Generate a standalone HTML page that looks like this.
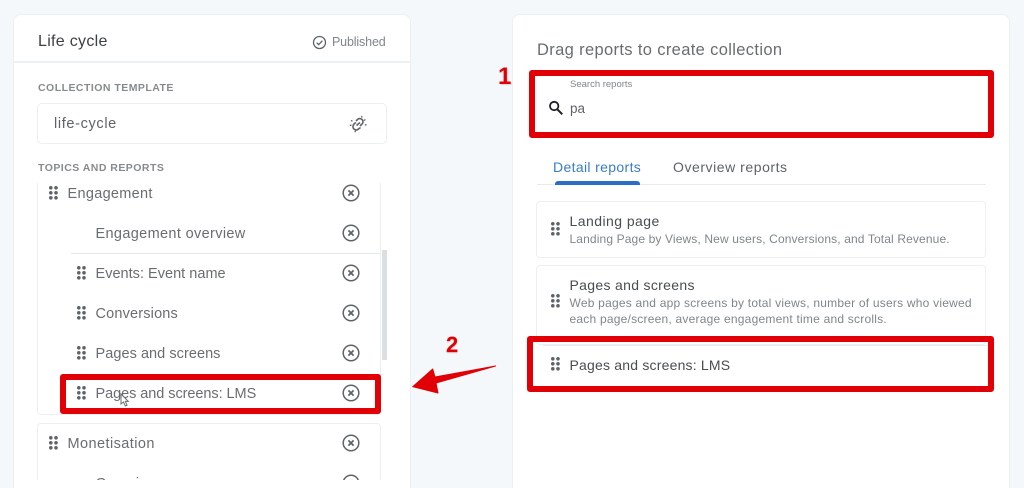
<!DOCTYPE html>
<html><head><meta charset="utf-8"><style>
html,body{margin:0;padding:0}
body{width:1024px;height:488px;overflow:hidden;background:#f4f8fa;position:relative;font-family:"Liberation Sans",sans-serif}
#w{position:absolute;left:0;top:0;width:1024px;height:488px;overflow:hidden;filter:blur(.3px)}
.a{position:absolute}
.t{position:absolute;white-space:nowrap;line-height:20px;height:20px}
.card{position:absolute;background:#fff;border:1px solid #edf0f2;box-sizing:border-box}
.row{font-size:14.5px;color:#6a6d70;letter-spacing:.35px}
.cap{font-size:10.5px;color:#737679;letter-spacing:.47px;font-weight:700;opacity:.85}
.red{position:absolute;box-sizing:border-box;border-style:solid;border-color:#e00006;border-radius:3px}
svg{position:absolute;overflow:visible}
</style></head><body><div id="w">

<div class="card" style="left:13px;top:14px;width:398px;height:490px;border-radius:8px 8px 0 0"></div>
<div class="a" style="left:13px;top:61px;width:398px;height:2px;background:#edf0f2"></div>
<div class="t" style="left:38px;top:32px;font-size:16px;color:#3c4043;letter-spacing:.3px">Life cycle</div>
<svg style="left:312px;top:35px" width="15" height="15" viewBox="0 0 15 15" fill="none" stroke="#5f6368" stroke-width="1.3"><circle cx="7.5" cy="7.5" r="6"/><path d="M4.7 7.7l2 2 3.7-4"/></svg>
<div class="t" style="left:332px;top:32px;font-size:12.5px;color:#80868b;letter-spacing:-.15px">Published</div>

<div class="t cap" style="left:38px;top:78px">COLLECTION TEMPLATE</div>
<div class="card" style="left:37px;top:103px;width:350px;height:41px;border-radius:5px"></div>
<div class="t" style="left:54px;top:114px;font-size:14.5px;color:#5f6368;letter-spacing:.65px">life-cycle</div>
<svg style="left:349px;top:115px" width="18" height="18" viewBox="0 0 18 18" fill="none" stroke="#5f6368"><path d="M7 6L8.500 4.500C10 3 12.500 3.500 13.500 5C14.500 6.500 14 8.500 12.500 9.500L11 11" stroke-width="1.600"/><path d="M11.500 12.500L9.500 14C8 15.500 5.500 15 4.500 13.500C3.500 12 4 10 5.500 8.500L7 7.500" stroke-width="1.600"/><path d="M7.500 10.500L11 7.500" stroke-width="1.500"/><path d="M13 1L12.500 2.500M16.500 4.500L15 5.500M17.500 10L15.800 9.800M2 5.500L3.500 6.200M.8 10.500L2.500 10M6 17.200L6.500 15.500" stroke-width="1.300"/></svg>
<div class="t cap" style="left:38px;top:158px">TOPICS AND REPORTS</div>

<div class="a" style="left:37px;top:183px;width:344px;height:232px;background:#fff;border:1px solid #edf0f2;border-top:none;box-sizing:border-box;border-radius:0 0 4px 4px"></div>
<div class="a" style="left:71px;top:253px;width:310px;height:1px;background:#e6e9eb"></div>
<div class="a" style="left:382px;top:250px;width:5px;height:110px;background:#dcdfe1"></div>
<div class="a" style="left:37px;top:423px;width:344px;height:70px;background:#fff;border:1px solid #edf0f2;box-sizing:border-box;border-radius:4px"></div>

<div class="t row" style="left:67.500px;top:184px;letter-spacing:.3px">Engagement</div>
<div class="t row" style="left:95.500px;top:224px">Engagement overview</div>
<div class="t row" style="left:95.500px;top:264px;letter-spacing:.02px">Events: Event name</div>
<div class="t row" style="left:95.500px;top:304px;letter-spacing:.17px">Conversions</div>
<div class="t row" style="left:95.500px;top:344px;letter-spacing:.05px">Pages and screens</div>
<div class="t row" style="left:95.500px;top:384px;letter-spacing:-.06px">Pages and screens: LMS</div>
<div class="t row" style="left:67.500px;top:434px;letter-spacing:.43px">Monetisation</div>
<div class="t row" style="left:95.500px;top:474px">Overview</div>

<svg width="0" height="0" style="left:0;top:0"><defs>
<g id="d" fill="#5f6368"><circle cx="1.800" cy="1.800" r="1.800"/><circle cx="7" cy="1.800" r="1.800"/><circle cx="1.800" cy="6.800" r="1.800"/><circle cx="7" cy="6.800" r="1.800"/><circle cx="1.800" cy="11.800" r="1.800"/><circle cx="7" cy="11.800" r="1.800"/></g>
<g id="x" fill="none" stroke="#5f6368"><circle cx="9" cy="9" r="7.800" stroke-width="1.500"/><path d="M6.400 6.400l5.200 5.200M11.600 6.400l-5.200 5.200" stroke-width="1.800"/></g>
</defs></svg>

<svg style="left:49px;top:186px" width="9" height="14"><use href="#d"/></svg>
<svg style="left:77px;top:266px" width="9" height="14"><use href="#d"/></svg>
<svg style="left:77px;top:306px" width="9" height="14"><use href="#d"/></svg>
<svg style="left:77px;top:346px" width="9" height="14"><use href="#d"/></svg>
<svg style="left:77px;top:386px" width="9" height="14"><use href="#d"/></svg>
<svg style="left:49px;top:436px" width="9" height="14"><use href="#d"/></svg>

<svg style="left:342px;top:184px" width="18" height="18"><use href="#x"/></svg>
<svg style="left:342px;top:224px" width="18" height="18"><use href="#x"/></svg>
<svg style="left:342px;top:264px" width="18" height="18"><use href="#x"/></svg>
<svg style="left:342px;top:304px" width="18" height="18"><use href="#x"/></svg>
<svg style="left:342px;top:344px" width="18" height="18"><use href="#x"/></svg>
<svg style="left:342px;top:384px" width="18" height="18"><use href="#x"/></svg>
<svg style="left:342px;top:434px" width="18" height="18"><use href="#x"/></svg>
<svg style="left:342px;top:474px" width="18" height="18"><use href="#x"/></svg>
<div class="a" style="left:14px;top:480px;width:396px;height:8px;background:#fff"></div>

<div class="red" style="left:60px;top:374px;width:321px;height:40px;border-width:6px"></div>
<svg style="left:120px;top:393px" width="11" height="15" viewBox="0 0 11 15"><path d="M1 1v10l2.500-2 1.800 4 1.800-.8-1.800-3.800h3z" fill="#fff" stroke="#6a6d70" stroke-width="1"/></svg>

<div class="card" style="left:512px;top:14px;width:498px;height:490px;border-radius:8px 8px 0 0"></div>
<div class="t" style="left:537px;top:40px;font-size:16.5px;color:#6a6d70;letter-spacing:.35px">Drag reports to create collection</div>

<div class="a" style="left:536px;top:81px;width:450px;height:50px;background:#fff"></div>
<div class="t" style="left:570px;top:75px;font-size:9.500px;color:#80868b">Search reports</div>
<svg style="left:548px;top:100px" width="16" height="16" viewBox="0 0 16 16" fill="none" stroke="#202124"><circle cx="6.200" cy="6" r="4.200" stroke-width="1.800"/><path d="M9.500 9.500l4.800 4.800" stroke-width="2"/></svg>
<div class="t" style="left:570px;top:99px;font-size:13.500px;color:#5f6368">pa</div>
<div class="red" style="left:529px;top:70px;width:465px;height:68px;border-width:6.500px"></div>
<div class="t" style="left:498px;top:66px;font-size:24px;line-height:22px;height:22px;font-weight:700;color:#e00006;text-shadow:0 0 1px #fff,1px 1px 1px #ccc">1</div>

<div class="t" style="left:553px;top:157px;font-size:14px;color:#3a7cc9;letter-spacing:.35px">Detail reports</div>
<div class="t" style="left:673px;top:157px;font-size:14px;color:#5f6368;letter-spacing:.55px">Overview reports</div>
<div class="a" style="left:537px;top:184px;width:449px;height:1px;background:#e8ebed"></div>
<div class="a" style="left:555px;top:181px;width:85px;height:3.500px;background:#2a6fc4;border-radius:3px 3px 0 0"></div>

<div class="card" style="left:536px;top:201px;width:450px;height:57px;border-radius:4px"></div>
<svg style="left:551px;top:222px" width="9" height="14"><use href="#d"/></svg>
<div class="t" style="left:569.500px;top:211px;font-size:14px;color:#4a4d50;letter-spacing:.45px">Landing page</div>
<div class="t" style="left:569.500px;top:229px;font-size:12px;color:#80868b;letter-spacing:.13px">Landing Page by Views, New users, Conversions, and Total Revenue.</div>

<div class="card" style="left:536px;top:265px;width:450px;height:80px;border-radius:4px"></div>
<svg style="left:551px;top:294px" width="9" height="14"><use href="#d"/></svg>
<div class="t" style="left:569.500px;top:275px;font-size:14px;color:#4a4d50;letter-spacing:.32px">Pages and screens</div>
<div class="t" style="left:569.500px;top:293px;font-size:12px;color:#80868b;letter-spacing:.22px">Web pages and app screens by total views, number of users who viewed</div>
<div class="t" style="left:569.500px;top:309px;font-size:12px;color:#80868b;letter-spacing:.22px">each page/screen, average engagement time and scrolls.</div>

<div class="a" style="left:535px;top:345px;width:452px;height:42px;background:#fff"></div>
<svg style="left:551px;top:357px" width="9" height="14"><use href="#d"/></svg>
<div class="t" style="left:569.500px;top:355px;font-size:14px;color:#4a4d50;letter-spacing:.2px">Pages and screens: LMS</div>
<div class="red" style="left:527px;top:336px;width:467px;height:56px;border-width:6px"></div>
<div class="a" style="left:543px;top:345px;width:444px;height:1px;background:#e8ebed"></div>

<div class="t" style="left:446px;top:334px;font-size:22px;line-height:22px;height:22px;font-weight:700;color:#e00006;text-shadow:0 1px 1px #d8b0b0">2</div>
<svg style="left:410px;top:362px" width="90" height="34" viewBox="0 0 90 34"><path d="M2.700 24.700L22.700 7 25 15 85.600 4 26 21 28 31z" fill="#e00006" stroke="#e00006" stroke-linejoin="round"/></svg>
</div></body></html>
